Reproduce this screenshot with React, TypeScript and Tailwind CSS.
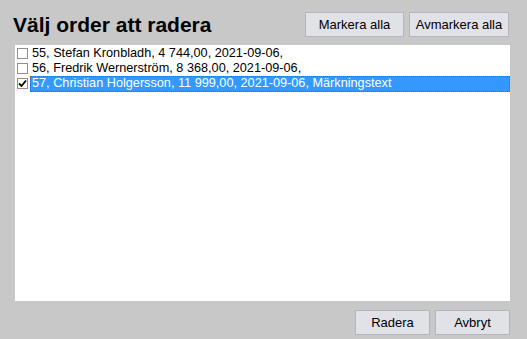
import React from "react";

const rows = [
  { text: "55, Stefan Kronbladh, 4 744,00, 2021-09-06,", checked: false, selected: false },
  { text: "56, Fredrik Wernerström, 8 368,00, 2021-09-06,", checked: false, selected: false },
  { text: "57, Christian Holgersson, 11 999,00, 2021-09-06, Märkningstext", checked: true, selected: true },
];

function Box({ checked }: { checked: boolean }) {
  return (
    <div className="w-[11px] h-[11px] border border-[#8f8f8f] bg-white relative shrink-0">
      {checked && (
        <svg width="9" height="9" viewBox="0 0 9 9" className="absolute left-0 top-0">
          <path d="M1 4.5 L3.5 7 L8 1.5" stroke="#000" strokeWidth="1.8" fill="none" />
        </svg>
      )}
    </div>
  );
}

function Btn({ children, w }: { children: React.ReactNode; w: string }) {
  return (
    <button
      className={`${w} h-[25px] bg-[#e1e1e8] border border-[#b5b5c2] text-[13px] text-black leading-none flex items-center justify-center`}
    >
      {children}
    </button>
  );
}

export default function App() {
  return (
    <div
      className="w-[527px] h-[339px] bg-[#c8c8c8] flex flex-col overflow-hidden"
      style={{ fontFamily: '"Liberation Sans", Arial, sans-serif' }}
    >
      <div className="h-[45px] flex items-start justify-between pr-[18px]">
        <div className="pl-[13px] pt-[14px] text-[21px] leading-[21px] font-bold text-black">
          Välj order att radera
        </div>
        <div className="flex gap-[5px] pt-[12px]">
          <Btn w="w-[99px]">Markera alla</Btn>
          <Btn w="w-[100px]">Avmarkera alla</Btn>
        </div>
      </div>
      <div className="ml-[15px] w-[495px] h-[256px] bg-white pt-[1px] flex flex-col">
        {rows.map((r, i) => (
          <div key={i} className="h-[15px] flex items-center">
            <div className="w-[15px] pl-[2px] flex items-center">
              <Box checked={r.checked} />
            </div>
            <div
              className={`flex-1 h-[16px] pl-[2px] flex items-center text-[12.7px] whitespace-nowrap ${
                r.selected
                  ? "bg-[#3399ff] text-white border border-dotted border-[#a05a00]"
                  : "text-black border border-transparent"
              }`}
            >
              <span className="-ml-[1px]">{r.text}</span>
            </div>
          </div>
        ))}
      </div>
      <div className="flex justify-end gap-[5px] pr-[17px] pt-[9px]">
        <Btn w="w-[75px]">Radera</Btn>
        <Btn w="w-[75px]">Avbryt</Btn>
      </div>
    </div>
  );
}
